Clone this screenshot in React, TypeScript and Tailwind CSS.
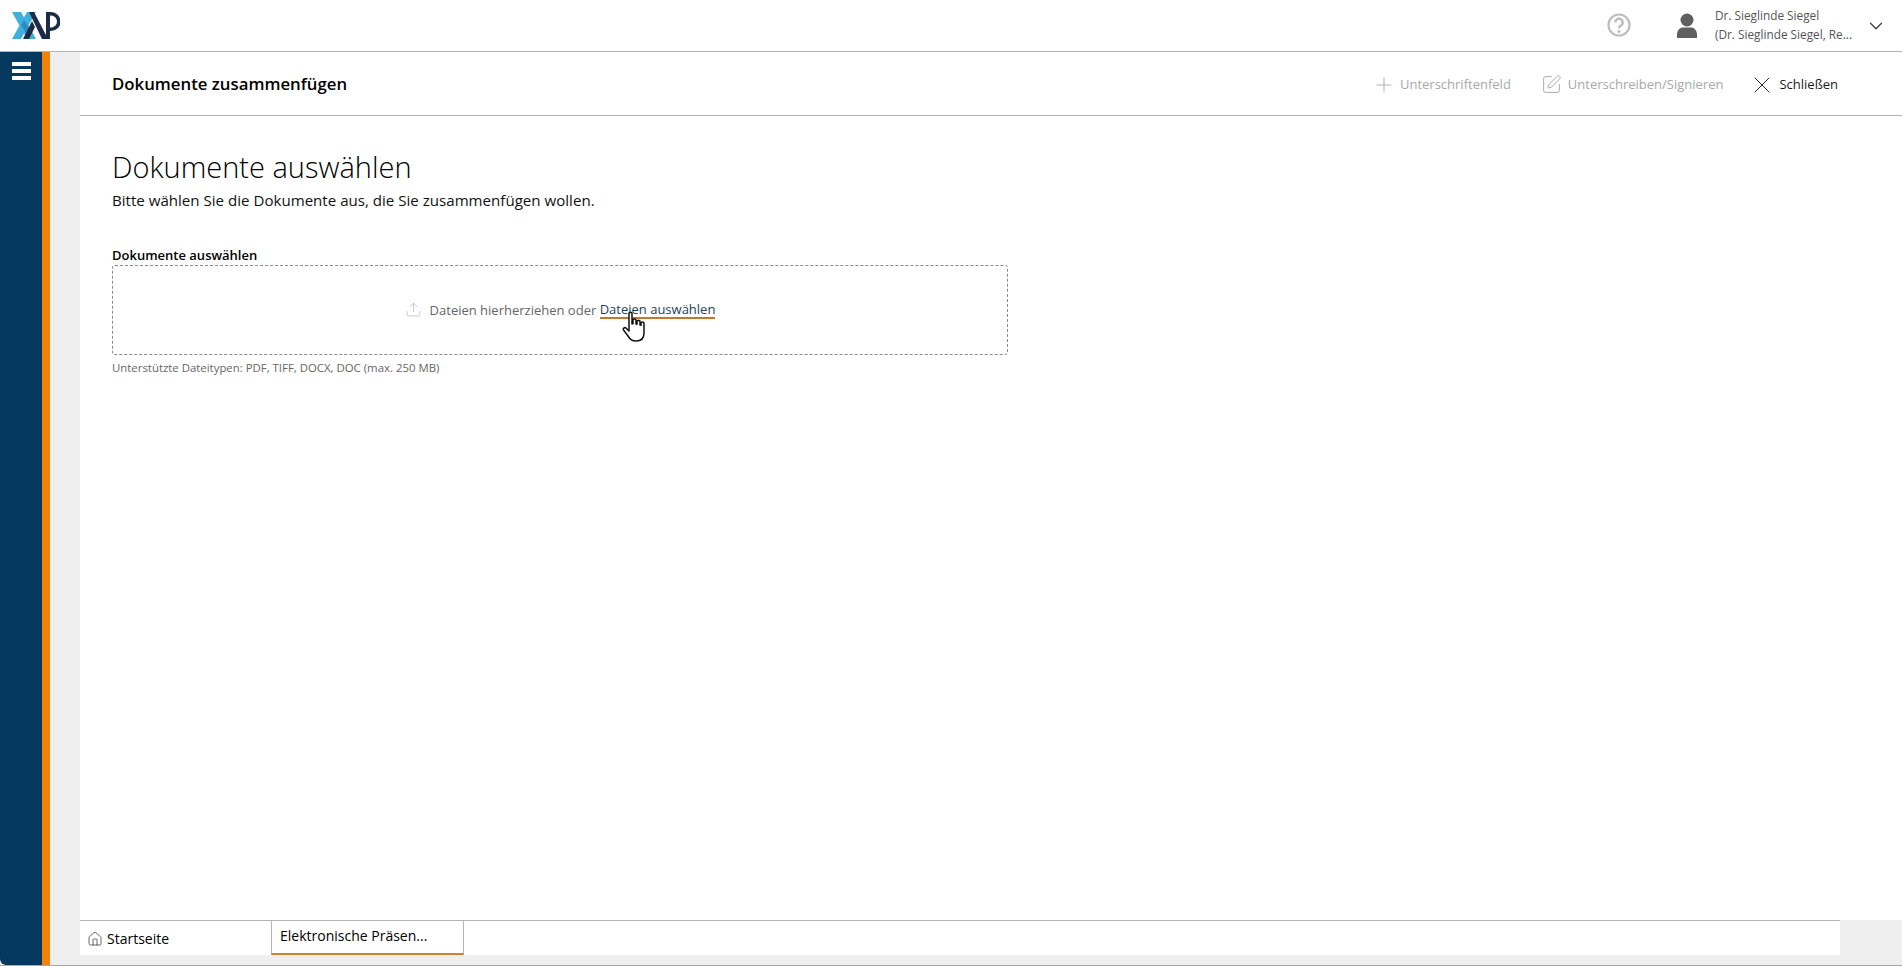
import { ChevronDown, Plus, SquarePen, X, Upload, House } from 'lucide-react'

const font = { fontFamily: '"Open Sans", sans-serif' }

function Logo() {
  return (
    <svg width="48" height="27" viewBox="0 0 48 27" className="block">
      <polygon points="0,0 9,0 24,27 15,27" fill="#3fb0dc" />
      <polygon points="0,27 9,27 24,0 15,0" fill="#3fb0dc" />
      <polygon points="9,13.500 12,8 19,19 16,24" fill="#2a8cc0" />
      <polygon points="11,27 17,27 23,15 20,9" fill="#1c2b47" />
      <polygon points="17,0 22,0 36,27 30,27" fill="#1c2b47" />
      <path d="M34 0h5a9.500 9.500 0 0 1 0 19h-1v-3.500h1a6 6 0 0 0 0-12h-1V27h-4z" fill="#1c2b47" />
    </svg>
  )
}

function HandCursor() {
  return (
    <svg width="26" height="32" viewBox="0 0 26 32" className="block">
      <path
        d="M8 2.500c0-1.600 3-1.600 3 0V13l1-.5V9c0-1.400 3-1.400 3 0v4l1 .2v-3c0-1.300 3-1.300 3 0V14l1 .3V12c0-1.300 3-1.200 3 .2V22c0 5-3 8-8 8-4.500 0-6-2-8-5l-4.500-6c-1-1.500 1-3 2.500-2l3 3z"
        fill="#fff"
        stroke="#111"
        strokeWidth="1.500"
        strokeLinejoin="round"
      />
    </svg>
  )
}

function Action({ icon, label, disabled }: { icon: React.ReactNode; label: string; disabled?: boolean }) {
  return (
    <div className={`flex items-center gap-[5px] text-[13px] ${disabled ? 'text-[#a8a8a8]' : 'text-[#1a1a1a]'}`}>
      {icon}
      <span>{label}</span>
    </div>
  )
}

export default function App() {
  return (
    <div style={font} className="h-screen overflow-hidden bg-white text-black flex flex-col">
      {/* Top bar */}
      <header className="h-[52px] shrink-0 border-b border-[#b4b4b4] flex items-center pl-3">
        <Logo />
        <div className="ml-auto flex items-center">
          <svg width="24" height="24" viewBox="0 0 24 24" fill="none" stroke="#bdbdbd" strokeWidth="2.200" className="mr-[46px] mt-[-1px]">
            <circle cx="12" cy="12" r="10.500" />
            <path d="M8.300 9.500a3.700 3.700 0 1 1 5.700 3c-1.300.8-2 1.300-2 2.800" strokeWidth="2.600" />
            <circle cx="12" cy="18.500" r="1.500" fill="#bdbdbd" stroke="none" />
          </svg>
          <svg width="20" height="26" viewBox="0 0 20 26" className="mr-[18px]" fill="#5f5f5f">
            <circle cx="10" cy="7" r="6.500" />
            <path d="M0 22c0-5 3-7.500 6-7.500h8c3 0 6 2.500 6 7.500v3H0z" />
          </svg>
          <div className="w-[142px] text-[11.800px] leading-[19px] text-[#555] mt-[-1px]">
            <div className="whitespace-nowrap">Dr. Sieglinde Siegel</div>
            <div className="whitespace-nowrap">(Dr. Sieglinde Siegel, Re...</div>
          </div>
          <ChevronDown className="w-[22px] h-[22px] ml-[8px] mr-[15px] text-[#444]" strokeWidth={1.500} />
        </div>
      </header>

      <div className="flex-1 min-h-0 flex border-b border-[#a8a8a8]">
        {/* Left rail */}
        <div className="w-[42px] shrink-0 bg-[#053a5e] rounded-bl-[6px] flex justify-center pt-[10px]">
          <div className="w-[19px] flex flex-col gap-[3px]">
            <div className="h-[4px] bg-white" />
            <div className="h-[4px] bg-white" />
            <div className="h-[4px] bg-white" />
          </div>
        </div>
        <div className="w-[8px] shrink-0 bg-[#f58208]" />
        <div className="w-[30px] shrink-0 bg-[#efefef]" />

        <div className="flex-1 min-w-0 flex flex-col">
          {/* Page toolbar */}
          <div className="h-[64px] shrink-0 border-b border-[#b4b4b4] flex items-center pl-[32px] pr-[64px] pt-[1px]">
            <h1 className="text-[16.800px] font-semibold">Dokumente zusammenfügen</h1>
            <div className="ml-auto flex items-center mt-[1px]">
              <Action disabled icon={<Plus className="w-[24px] h-[24px] mr-[-1px]" strokeWidth={0.900} />} label="Unterschriftenfeld" />
              <div className="w-[30px]" />
              <Action disabled icon={<SquarePen className="w-[21px] h-[21px] mr-[1px]" strokeWidth={1.100} />} label="Unterschreiben/Signieren" />
              <div className="w-[25px]" />
              <Action icon={<X className="w-[28px] h-[28px] mr-[-2px]" strokeWidth={0.800} />} label="Schließen" />
            </div>
          </div>

          {/* Content */}
          <main className="flex-1 min-h-0 pl-[32px] pt-[31px]">
            <h2 className="text-[29px] leading-[40px] font-light">Dokumente auswählen</h2>
            <p className="text-[15.100px] leading-[20px] mt-[3px] text-[#111]">Bitte wählen Sie die Dokumente aus, die Sie zusammenfügen wollen.</p>
            <div className="w-[896px] mt-[35px]">
              <div className="text-[13px] font-semibold leading-[20px]">Dokumente auswählen</div>
              <div className="h-[90px] border border-dashed border-[#8a8a8a] rounded-[3px] flex items-center justify-center text-[13px] text-[#666] pt-[1px]">
                <Upload className="w-[17px] h-[17px] text-[#c4c4c4] mr-[8px] mt-[-3px]" strokeWidth={1.300} />
                <span>Dateien hierherziehen oder&nbsp;</span>
                <span className="relative text-[#1d3f5e] border-b-2 border-[#c9762c] leading-[15px]">
                  Dateien auswählen
                  <span className="absolute left-[21px] top-[9px] w-[26px] h-[32px]">
                    <HandCursor />
                  </span>
                </span>
              </div>
              <div className="text-[11.400px] leading-[16px] mt-[5px] text-[#666]">Unterstützte Dateitypen: PDF, TIFF, DOCX, DOC (max. 250 MB)</div>
            </div>
          </main>

          {/* Tabs */}
          <div className="shrink-0 flex bg-[#efefef]">
            <div className="h-[35px] flex-1 flex border-t border-[#b4b4b4] bg-white text-[14px]">
              <div className="w-[191px] flex items-center pl-[7px] gap-[4px] mt-[1px]">
                <House className="w-[16px] h-[16px] text-[#333]" strokeWidth={1.100} />
                <span>Startseite</span>
              </div>
              <div className="w-[193px] flex items-center pl-[8px] border-x border-[#b4b4b4] border-b-2 border-b-[#c9862f] mt-[-1px] pb-[2px]">
                Elektronische Präsen...
              </div>
            </div>
            <div className="w-[62px] shrink-0" />
          </div>
          <div className="h-[10px] shrink-0 bg-[#efefef]" />
        </div>
      </div>
    </div>
  )
}
